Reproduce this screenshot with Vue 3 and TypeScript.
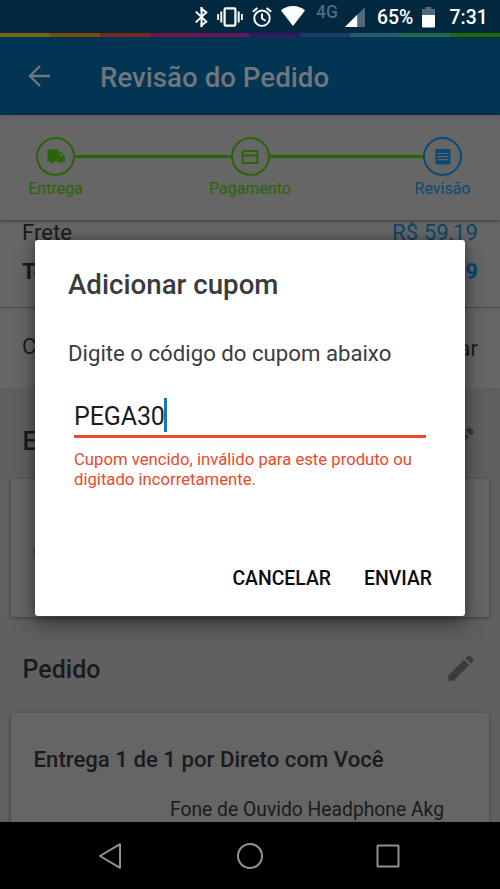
<script setup lang="ts">
import { ref } from 'vue'

interface Step {
  label: string
  icon: 'truck' | 'card' | 'note'
}

const stripes: string[] = [
  '#796610', '#794c0e', '#77291a', '#76124a', '#641759',
  '#351660', '#1b3c6c', '#1e5f68', '#1f6a4c', '#22660a',
]
const steps: Step[] = [
  { label: 'Entrega', icon: 'truck' },
  { label: 'Pagamento', icon: 'card' },
  { label: 'Revisão', icon: 'note' },
]
const coupon = ref('PEGA30')
const pencil =
  'M3 17.25V21h3.75L17.81 9.94l-3.75-3.75L3 17.25zM20.71 7.04a1 1 0 0 0 0-1.41l-2.34-2.34a1 1 0 0 0-1.41 0l-1.83 1.83 3.75 3.75 1.83-1.83z'
</script>

<template>
  <div class="screen">
    <div class="status">
      <svg class="bt" viewBox="0 0 13 20" fill="none" stroke="#fff" stroke-width="2">
        <path d="M.8 4.600 11.300 14.600 6.600 18.200V1.800L11.300 5.400.8 15.400" />
        <path d="M6.600 0v4M6.600 16v4" />
      </svg>
      <svg class="vib" viewBox="0 0 26 20" fill="none" stroke="#fff">
        <rect x="7.6" y="1.4" width="10.8" height="17.2" rx="1" stroke-width="2.2" />
        <path d="M4.3 4.5v11M21.7 4.5v11" stroke-width="2" />
        <path d="M1.1 7v6M24.9 7v6" stroke-width="1.8" />
      </svg>
      <svg class="alarm" viewBox="0 0 20 20" fill="none" stroke="#fff" stroke-width="1.9">
        <circle cx="10" cy="11.2" r="7.7" />
        <path d="M10 6.5v5l3.6 2.2M.8 4.8 5.4 1M19.2 4.8 14.6 1" />
      </svg>
      <svg class="wifi" viewBox="0 0 24 20"><path d="M12 20 0 4.4C3 1.700 7.200 0 12 0s9 1.700 12 4.400z" fill="#fff" /></svg>
      <span class="net">4G</span>
      <svg class="signal" viewBox="0 0 20 20">
        <path d="M20 0v20H0z" fill="#4f6a7b" /><path d="M12.200 7.800V20H0z" fill="#fff" />
      </svg>
      <span class="pct">65%</span>
      <svg class="battery" viewBox="0 0 13 21">
        <path d="M3.500 0h6v2H13v6H0V2h3.500z" fill="#4f6a7b" /><path d="M0 8h13v11.500q0 1-1 1H1q-1 0-1-1z" fill="#fff" />
      </svg>
      <span class="time">7:31</span>
    </div>
    <div class="stripes">
      <i v-for="c in stripes" :key="c" :style="{ background: c }"></i>
    </div>
    <header class="bar">
      <svg viewBox="0 0 22 22" fill="none" stroke="#6f767d" stroke-width="2.400">
        <path d="M22 11H2M12 1 2 11l10 10" />
      </svg>
      <h1>Revisão do Pedido</h1>
    </header>

    <nav class="stepper">
      <template v-for="(s, i) in steps" :key="s.label">
        <i v-if="i > 0" class="link"></i>
        <div class="step" :class="{ current: i === 2 }">
          <span class="ring">
            <svg v-if="s.icon === 'truck'" viewBox="0 0 18 15">
              <path d="M1.500 0h9q1 0 1 1v1.500h2.800L18 7.200V12h-1.800a2.300 2.300 0 0 1-4.500 0H6.900a2.300 2.300 0 0 1-4.500 0H.5V1q0-1 1-1z" fill="currentColor" />
              <path d="M12.900 4.200h1.200l1.900 2.600h-3.100z" fill="#666" />
            </svg>
            <svg v-else-if="s.icon === 'card'" viewBox="0 0 18 15">
              <path d="M1.500 2q0-.5.500-.5h14q.5 0 .5.500v11q0 .5-.5.500H2q-.5 0-.5-.5zM1.500 6h15" fill="none" stroke="currentColor" stroke-width="1.800" />
            </svg>
            <svg v-else viewBox="0 0 18 16">
              <rect x="1.500" width="15" height="15.500" rx=".8" fill="currentColor" />
              <path d="M3.500 4.500h11M3.500 7.600h11M3.500 10.700h11" stroke="#666" stroke-width="1.200" />
            </svg>
          </span>
          <span class="label">{{ s.label }}</span>
        </div>
      </template>
    </nav>

    <main class="content">
      <section class="totals">
        <div class="row"><span>Frete</span><span class="blue">R$ 59,19</span></div>
        <div class="row strong"><span>Total</span><span class="blue">9</span></div>
      </section>
      <section class="coupon"><span>Cupom</span><span class="add">Adicionar</span></section>
      <section class="group">
        <div class="head">
          <h2>Endereço</h2>
          <svg viewBox="0 0 24 24"><path :d="pencil" /></svg>
        </div>
        <div class="card address">A</div>
        <div class="head second">
          <h2>Pedido</h2>
          <svg viewBox="0 0 24 24"><path :d="pencil" /></svg>
        </div>
        <div class="card order">
          <h3>Entrega 1 de 1 por Direto com Você</h3>
          <p>Fone de Ouvido Headphone Akg</p>
        </div>
      </section>
    </main>

    <footer class="keys">
      <svg viewBox="0 0 24 28"><path d="M22 2.200v23.600L2 14z" /></svg>
      <svg class="home" viewBox="0 0 28 28"><circle cx="14" cy="14" r="12" /></svg>
      <svg class="recent" viewBox="0 0 24 24"><rect x="1.500" y="1.500" width="21" height="21" rx=".5" /></svg>
    </footer>

    <div class="dialog" role="dialog">
      <h2>Adicionar cupom</h2>
      <p class="message">Digite o código do cupom abaixo</p>
      <div class="field"><span>{{ coupon }}</span><i class="caret"></i></div>
      <p class="error">Cupom vencido, inválido para este produto ou digitado incorretamente.</p>
      <div class="actions"><button>CANCELAR</button><button>ENVIAR</button></div>
    </div>
  </div>
</template>

<style>
body { margin: 0; background: #000; }
</style>

<style scoped>
.screen { position: relative; display: flex; flex-direction: column; width: 500px; height: 889px; overflow: hidden; background: #666; color: #1b1b1b; font-family: Roboto, "Liberation Sans", sans-serif; }
h1, h2, h3, p { margin: 0; font-weight: 500; }
svg { display: block; flex: none; }
span { white-space: nowrap; }

.status { display: flex; align-items: flex-start; height: 33px; box-sizing: border-box; padding: 7px 0 0 195px; background: #022840; color: #fff; }
.bt { width: 13px; height: 20px; }
.vib { width: 26px; height: 20px; margin-left: 9px; }
.alarm { width: 20px; height: 20px; margin-left: 9px; }
.wifi { width: 24px; height: 20px; margin: -1px 0 0 9px; }
.net { width: 29px; margin: -4px 0 0 11px; font-size: 17.500px; line-height: 19px; font-weight: 500; color: #4f6a7b; }
.signal { width: 20px; height: 20px; }
.pct { width: 45px; margin: 0 0 0 12px; font-size: 19.400px; line-height: 22px; font-weight: 500; }
.battery { width: 13px; height: 21px; }
.time { margin: 0 0 0 14.500px; font-size: 19.400px; line-height: 22px; font-weight: 500; }

.stripes { display: flex; height: 4px; }
.stripes i { flex: 1; }
.bar { display: flex; align-items: center; height: 78px; padding-left: 28px; background: #023453; }
.bar svg { width: 22px; height: 22px; }
.bar h1 { margin: 4px 0 0 50px; font-size: 27.700px; line-height: 32px; color: #70767d; }

.stepper { position: relative; z-index: 1; display: flex; align-items: flex-start; flex: none; height: 105px; box-sizing: border-box; padding: 22px 38px 0 36px; background: linear-gradient(#606060, #666 6px); box-shadow: 0 1px 4px rgba(0, 0, 0, .45); }
.step { display: flex; flex-direction: column; align-items: center; width: 39px; color: #296506; }
.step.current { color: #0a4a74; }
.ring { display: flex; align-items: center; justify-content: center; width: 39px; height: 39px; box-sizing: border-box; border: 2px solid currentColor; border-radius: 50%; }
.ring svg { width: 18px; height: 16px; }
.label { margin-top: 3px; font-size: 16px; line-height: 20px; }
.link { flex: 156 0 0; height: 3px; margin-top: 18px; background: #296506; }
.step + .link + .step + .link { flex-grow: 154; }

.content { flex: none; height: 602px; overflow: hidden; }
.totals { height: 87px; border-bottom: 1.500px solid #474747; font-size: 22.200px; line-height: 24px; }
.row { display: flex; justify-content: space-between; padding: 0 22px; height: 39px; }
.strong { font-weight: 700; }
.blue { color: #0a456b; }
.coupon { display: flex; justify-content: space-between; height: 82px; box-sizing: border-box; padding: 26px 22px 0; font-size: 22px; line-height: 26px; }
.add { margin-top: 2px; }
.group { height: 434px; background: #606060; box-shadow: 0 -1px 2px rgba(0, 0, 0, .12); }
.head { display: flex; justify-content: space-between; align-items: center; height: 89px; box-sizing: border-box; padding: 14px 23px 0 22.500px; }
.head h2 { font-size: 25px; line-height: 30px; }
.head svg { width: 34px; height: 34px; margin: -4px -1px 0 0; fill: #3b3b3b; }
.second { height: 96px; padding-top: 9px; }
.card { margin: 0 11px; border-radius: 3px; background: #656565; box-shadow: 0 1px 4px rgba(0, 0, 0, .35); }
.address { height: 138px; box-sizing: border-box; padding: 56px 22.500px; font-size: 19.500px; line-height: 24px; }
.order { height: 140px; box-sizing: border-box; padding: 33px 22.500px; }
.order h3 { font-size: 22.200px; line-height: 26px; }
.order p { margin: 26px 0 0 136.500px; font-size: 19.300px; line-height: 24px; font-weight: 400; }

.keys { display: flex; align-items: center; flex: none; height: 67px; padding-left: 98px; background: #000; }
.keys svg { width: 24px; height: 28px; fill: none; stroke: #929292; stroke-width: 2; stroke-linejoin: round; }
.keys .home { width: 28px; margin-left: 114px; }
.keys .recent { height: 24px; margin-left: 112px; }

.dialog { position: absolute; z-index: 2; top: 240px; left: 35px; width: 430px; height: 376px; box-sizing: border-box; padding: 30px 33px 0; border-radius: 3px; background: #fff; box-shadow: 0 10px 22px rgba(0, 0, 0, .38), 0 0 10px rgba(0, 0, 0, .3); color: #3b3b3d; }
.dialog h2 { font-size: 27.700px; line-height: 30px; }
.message { margin-top: 39px; font-size: 22.200px; line-height: 28px; font-weight: 400; white-space: nowrap; }
.field { display: flex; align-items: flex-start; height: 40px; box-sizing: border-box; margin: 31px 6px 0 6px; width: 352px; border-bottom: 3px solid #ea4a28; font-size: 25px; line-height: 37px; letter-spacing: -.1px; color: #1c1c1c; }
.caret { width: 3px; height: 34px; margin-left: -1px; background: #1677b3; }
.error { width: 352px; margin: 12px 0 0 6px; font-size: 16.700px; line-height: 19.500px; font-weight: 400; color: #ea4a28; }
.actions { display: flex; justify-content: flex-end; gap: 33px; margin-top: 78px; }
.actions button { padding: 0; border: 0; background: none; font: 500 19.400px/24px Roboto, sans-serif; color: #0c0c0c; }
</style>
